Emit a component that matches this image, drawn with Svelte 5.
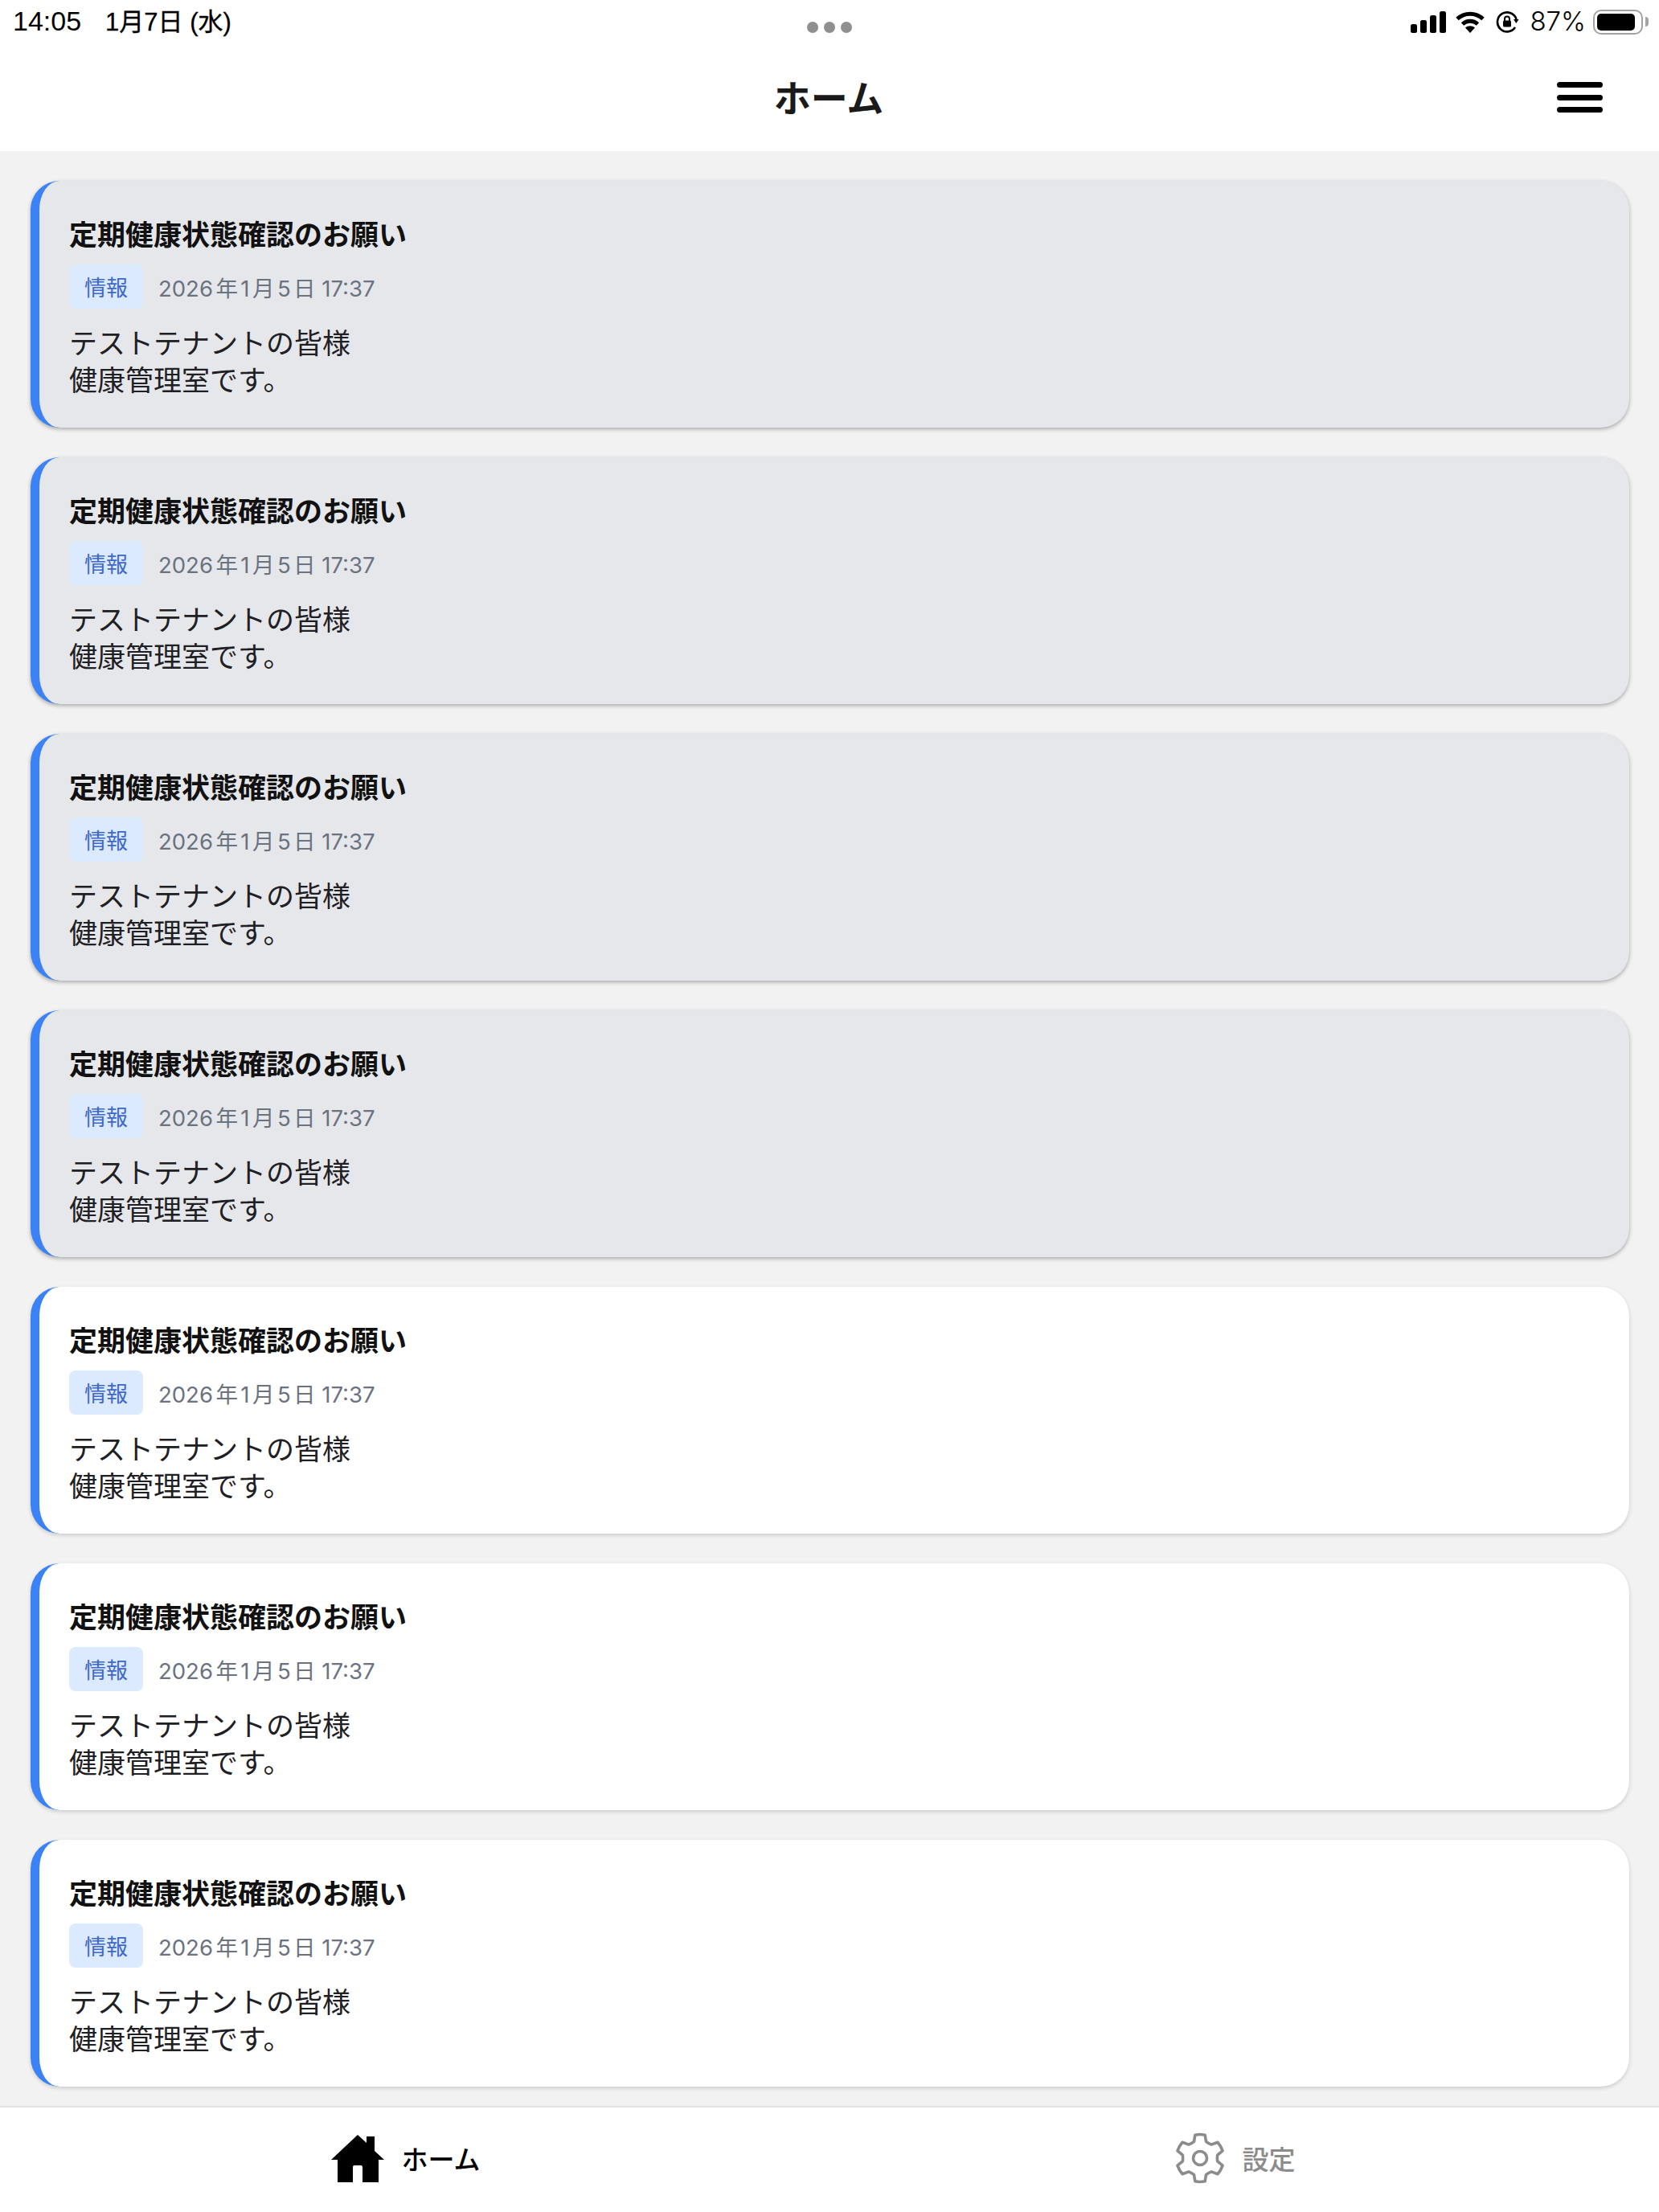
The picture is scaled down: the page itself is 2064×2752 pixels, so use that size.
<script>
	// first four cards are already read (grey)
	const notices = [true, true, true, true, false, false, false].map((read) => ({
		read,
		title: '定期健康状態確認のお願い',
		tag: '情報',
		date: '2026年1月5日 17:37',
		lines: ['テストテナントの皆様', '健康管理室です。']
	}));

	const pt = (r, deg) => {
		const a = (deg * Math.PI) / 180;
		return `${(32 + r * Math.cos(a)).toFixed(2)} ${(32 + r * Math.sin(a)).toFixed(2)}`;
	};
	const gear = () => {
		let d = '';
		for (let i = 0; i < 6; i++) {
			const a = -90 + i * 60;
			d += `${i ? 'A22 22 0 0 0 ' : 'M'}${pt(22, a - 20)} L${pt(29.5, a - 12)} A30 30 0 0 1 ${pt(29.5, a + 12)} L${pt(22, a + 20)} `;
		}
		return d + `A22 22 0 0 0 ${pt(22, -110)} Z`;
	};
</script>

<div class="page">
	<header class="top">
		<div class="status">
			<div class="clock">
				<span class="time">14:05</span>
				<span class="day">1月7日 (水)</span>
			</div>
			<div class="dots"><i></i><i></i><i></i></div>
			<div class="sys">
				<svg class="signal" viewBox="0 0 44 27" width="44" height="27" fill="#000">
					<rect x="0" y="16" width="8" height="11" rx="2.5" />
					<rect x="12" y="11" width="8" height="16" rx="2.5" />
					<rect x="24" y="5" width="8" height="22" rx="2.5" />
					<rect x="36" y="0" width="8" height="27" rx="2.5" />
				</svg>
				<svg class="wifi" viewBox="0 0 36 27" width="36" height="27" fill="none" stroke="#000" stroke-width="5">
					<path d="M2 9.5C11 1 25 1 34 9.5" />
					<path d="M8.5 16C14 11 22 11 27.5 16" />
					<path d="M18 27l-6-6.5c3.4-3 8.6-3 12 0z" fill="#000" stroke="none" />
				</svg>
				<svg class="lock" viewBox="0 0 29 27" width="29" height="27" fill="none" stroke="#000" stroke-width="2.6">
					<path d="M24 20A12 12 0 1 1 25.5 10" />
					<path d="M22 10l6.5 0-3.2 5z" fill="#000" stroke="none" />
					<rect x="9" y="11.5" width="10" height="8" rx="1.5" fill="#000" stroke="none" />
					<path d="M11 12V9.5a3 3 0 0 1 6 0V12" stroke-width="2" />
				</svg>
				<span class="pct">87%</span>
				<div class="battery"><div class="level"></div></div>
				<div class="nub"></div>
			</div>
		</div>
		<div class="nav">
			<h1>ホーム</h1>
			<button class="menu" aria-label="メニュー"><span></span><span></span><span></span></button>
		</div>
	</header>

	<main class="list">
		{#each notices as n}
			<article class="card" class:read={n.read}>
				<h2>{n.title}</h2>
				<div class="meta">
					<span class="tag">{n.tag}</span>
					<span class="date">{n.date}</span>
				</div>
				<p>{n.lines[0]}<br />{n.lines[1]}</p>
			</article>
		{/each}
	</main>

	<nav class="tabs">
		<div class="tab active">
			<svg viewBox="0 0 66 59" width="66" height="59" fill="#000">
				<path d="M33 0L44 10V2H54V20L66 31H59V59H39V40Q39 38 37 38H29Q27 38 27 40V59H8V31H0Z" />
			</svg>
			<span>ホーム</span>
		</div>
		<div class="tab">
			<svg viewBox="0 0 64 64" width="64" height="64" fill="none" stroke="#8c8c8c" stroke-width="3.6" stroke-linejoin="round">
				<path d={gear()} />
				<circle cx="32" cy="32" r="8.5" />
			</svg>
			<span>設定</span>
		</div>
	</nav>
</div>

<style>
	:global(body) {
		margin: 0;
		background: #f2f2f2;
	}
	.page {
		height: 2752px;
		display: flex;
		flex-direction: column;
		font-family: "Noto Sans CJK JP", "Noto Sans", sans-serif;
		color: #111;
	}
	.top {
		background: #fff;
		height: 188px;
		flex: none;
	}
	.status {
		height: 54px;
		display: flex;
		align-items: center;
		justify-content: space-between;
		position: relative;
		padding: 0 13px 0 16px;
		font-family: "Liberation Sans", "Noto Sans CJK JP", sans-serif;
		color: #000;
	}
	.clock {
		display: flex;
		align-items: baseline;
		gap: 30px;
		margin-top: -6px;
	}
	.time {
		font-size: 34px;
	}
	.day {
		font-size: 31px;
		-webkit-text-stroke: 0.3px #000;
	}
	.dots {
		position: absolute;
		left: 1004px;
		top: 27px;
		display: flex;
		gap: 7px;
	}
	.dots i {
		width: 14px;
		height: 14px;
		border-radius: 50%;
		background: #8f8f8f;
	}
	.sys {
		display: flex;
		align-items: center;
	}
	.wifi {
		margin-left: 12px;
	}
	.lock {
		margin-left: 14px;
	}
	.pct {
		margin-left: 13px;
		margin-top: -2px;
		font-family: "Inter", "Liberation Sans", sans-serif;
		font-size: 33px;
		font-weight: 300;
	}
	.battery {
		margin-left: 9px;
		box-sizing: border-box;
		width: 62px;
		height: 31px;
		border: 2.5px solid #a3a3a3;
		border-radius: 10px;
		padding: 3px;
	}
	.level {
		width: 47px;
		height: 100%;
		border-radius: 5px;
		background: #000;
	}
	.nub {
		margin-left: 3px;
		width: 4px;
		height: 12px;
		border-radius: 0 4px 4px 0;
		background: #a3a3a3;
	}
	.nav {
		height: 134px;
		display: flex;
		align-items: center;
		justify-content: center;
		position: relative;
	}
	h1 {
		margin: 0 2px 4px 0;
		font-size: 46px;
		line-height: 60px;
		font-weight: 700;
		color: #1a1a1a;
	}
	.menu {
		position: absolute;
		right: 70px;
		top: 48px;
		width: 57px;
		padding: 0;
		border: 0;
		background: none;
		display: flex;
		flex-direction: column;
		gap: 8.5px;
	}
	.menu span {
		height: 7px;
		border-radius: 4px;
		background: #000;
	}
	.list {
		flex: 1;
		padding: 37px 37px 0 38px;
		display: flex;
		flex-direction: column;
		gap: 37px;
	}
	.card {
		box-sizing: border-box;
		height: 307px;
		padding: 40px 38px 0 37px;
		border-left: 11px solid #3b82f6;
		border-radius: 36px;
		background: #fff;
		box-shadow: 0 2px 5px rgba(0, 0, 0, 0.16);
	}
	.card.read {
		background: #e5e7eb;
		box-shadow: 0 2px 5px rgba(0, 0, 0, 0.3);
	}
	h2 {
		margin: 0;
		font-size: 35px;
		line-height: 50px;
		font-weight: 700;
		color: #111;
	}
	.meta {
		margin-top: 14px;
		display: flex;
		align-items: center;
		gap: 19px;
	}
	.tag {
		width: 92px;
		height: 55px;
		border-radius: 8px;
		background: #dbeafe;
		color: #3f68c9;
		font-size: 27px;
		line-height: 55px;
		text-align: center;
	}
	.date {
		font-family: "Inter", "Noto Sans CJK JP", sans-serif;
		font-size: 27.5px;
		text-autospace: normal;
		color: #6b7280;
	}
	p {
		margin: 18px 0 0;
		font-size: 35px;
		line-height: 46px;
		color: #1f2023;
	}
	.tabs {
		flex: none;
		height: 130px;
		border-top: 2px solid #e2e2e2;
		background: #fff;
		display: grid;
		grid-template-columns: 1fr 1fr;
		column-gap: 21px;
		padding-right: 23px;
	}
	.tab {
		display: flex;
		align-items: center;
		justify-content: center;
		gap: 21px;
		font-size: 33px;
		font-weight: 500;
		color: #8c8c8c;
		padding-bottom: 4px;
	}
	.tab.active {
		color: #000;
	}
</style>
